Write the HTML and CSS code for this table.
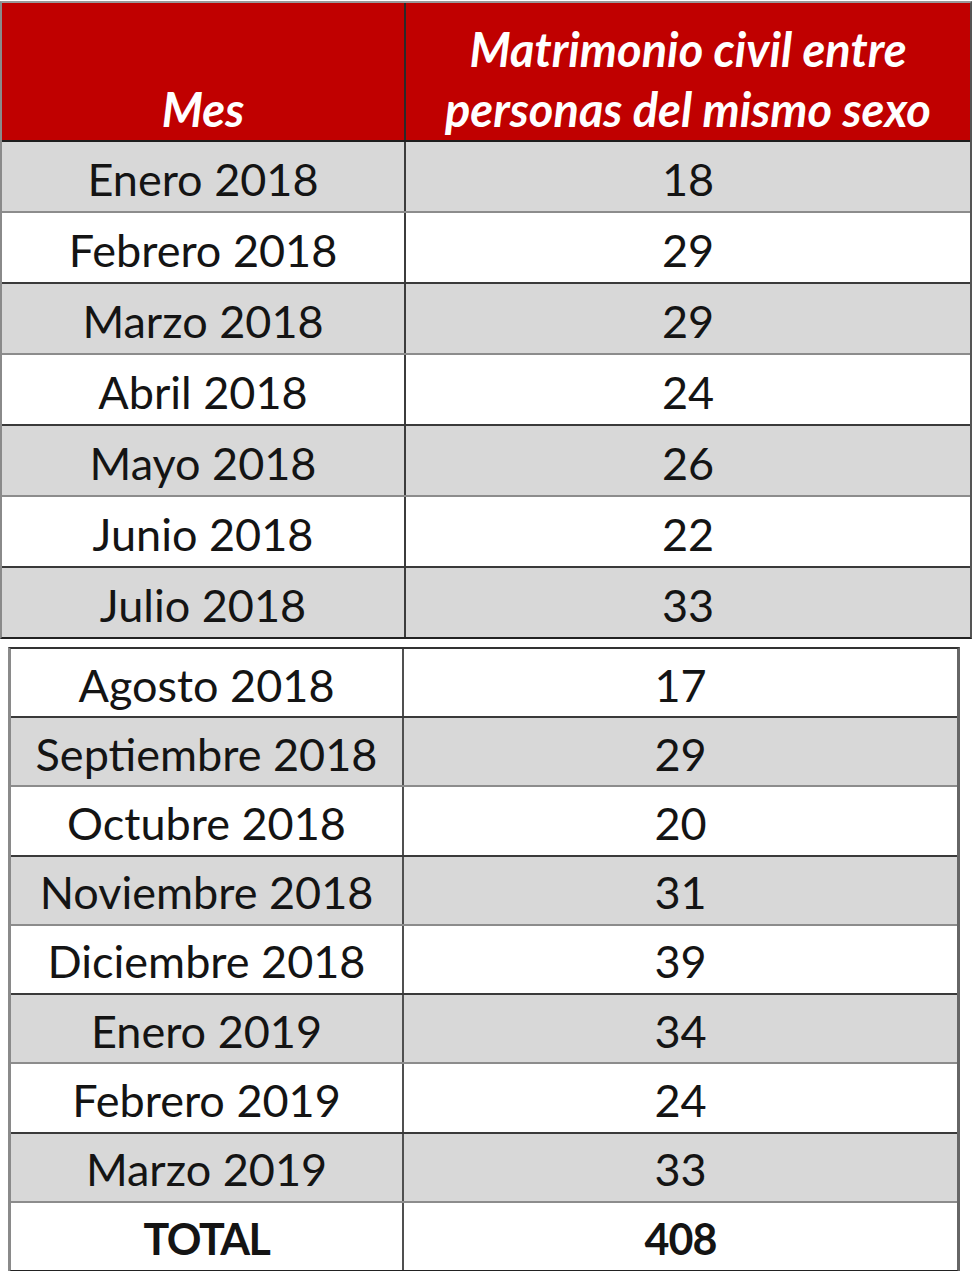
FILE: index.html
```html
<!DOCTYPE html>
<html lang="es">
<head>
<meta charset="utf-8">
<title>Matrimonio civil entre personas del mismo sexo</title>
<link rel="stylesheet" href="styles.css">
</head>
<body>
<div class="page">
  <div class="tbl tbl-top">
    <div class="row head">
      <div class="cell c1"><span>Mes</span></div>
      <div class="cell c2"><span>Matrimonio civil entre<br>personas del mismo sexo</span></div>
    </div>
    <div class="row grey"><div class="cell c1">Enero 2018</div><div class="cell c2">18</div></div>
    <div class="row white"><div class="cell c1">Febrero 2018</div><div class="cell c2">29</div></div>
    <div class="row grey"><div class="cell c1">Marzo 2018</div><div class="cell c2">29</div></div>
    <div class="row white"><div class="cell c1">Abril 2018</div><div class="cell c2">24</div></div>
    <div class="row grey"><div class="cell c1">Mayo 2018</div><div class="cell c2">26</div></div>
    <div class="row white"><div class="cell c1">Junio 2018</div><div class="cell c2">22</div></div>
    <div class="row grey last"><div class="cell c1">Julio 2018</div><div class="cell c2">33</div></div>
  </div>
  <div class="tbl tbl-bottom">
    <div class="row white"><div class="cell c1">Agosto 2018</div><div class="cell c2">17</div></div>
    <div class="row grey"><div class="cell c1">Septiembre 2018</div><div class="cell c2">29</div></div>
    <div class="row white"><div class="cell c1">Octubre 2018</div><div class="cell c2">20</div></div>
    <div class="row grey"><div class="cell c1">Noviembre 2018</div><div class="cell c2">31</div></div>
    <div class="row white"><div class="cell c1">Diciembre 2018</div><div class="cell c2">39</div></div>
    <div class="row grey"><div class="cell c1">Enero 2019</div><div class="cell c2">34</div></div>
    <div class="row white"><div class="cell c1">Febrero 2019</div><div class="cell c2">24</div></div>
    <div class="row grey"><div class="cell c1">Marzo 2019</div><div class="cell c2">33</div></div>
    <div class="row white total"><div class="cell c1">TOTAL</div><div class="cell c2">408</div></div>
  </div>
</div>
</body>
</html>
```
FILE: styles.css
```css
html, body {
  margin: 0;
  padding: 0;
  background: #ffffff;
}
body {
  width: 972px;
  height: 1271px;
  overflow: hidden;
  font-family: Lato, "Open Sans", "Liberation Sans", sans-serif;
  color: #141414;
}
.page {
  padding-top: 1px;
}
.tbl {
  box-sizing: border-box;
  display: flex;
  flex-direction: column;
}
.tbl-top {
  width: 972px;
  border-top: 2px solid #9a9a9a;
  border-left: 2px solid #8a8a8a;
  border-right: 2px solid #555;
  border-bottom: 2px solid #222;
}
.tbl-bottom {
  width: 952px;
  margin: 8px 0 0 8px;
  height: 625px;
  border-top: 2px solid #333;
  border-left: 3px solid #8a8a8a;
  border-right: 3px solid #666;
  border-bottom: 2px solid #222;
}
.row {
  display: grid;
  box-sizing: border-box;
}
.tbl-top .row {
  grid-template-columns: 404px 1fr;
  height: 71px;
}
.tbl-bottom .row {
  grid-template-columns: 393px 1fr;
  flex: 1 1 0;
}
.row.grey {
  background: #d8d8d8;
  border-bottom: 2px solid #8c8c8c;
}
.row.white {
  background: #ffffff;
  border-bottom: 2px solid #3a3a3a;
}
.row.last, .row.total {
  border-bottom: none;
}
.tbl-top .row.last {
  height: 69px;
}
.cell {
  display: flex;
  align-items: center;
  justify-content: center;
  font-size: 45px;
  line-height: 1;
  padding-top: 5px;
  white-space: nowrap;
}
.c1 {
  border-right: 2px solid #3c3c3c;
}
.tbl-bottom .c1 {
  border-right-color: #505050;
}
.row.head {
  height: 139px;
  background: #c00000;
  border-bottom: 2px solid #1e1e1e;
}
.head .cell {
  color: #ffffff;
  font-weight: bold;
  font-style: italic;
  align-items: flex-end;
  padding: 0 0 1px 0;
  font-size: 47px;
  line-height: 60px;
  text-align: center;
  letter-spacing: 0;
}
.head .c1 {
  border-right-color: #2a2a2a;
}
.total .cell {
  font-weight: bold;
  font-size: 43px;
}
.total .c1 {
  letter-spacing: -1.5px;
}
.total .c2 {
  letter-spacing: -1px;
}
```
